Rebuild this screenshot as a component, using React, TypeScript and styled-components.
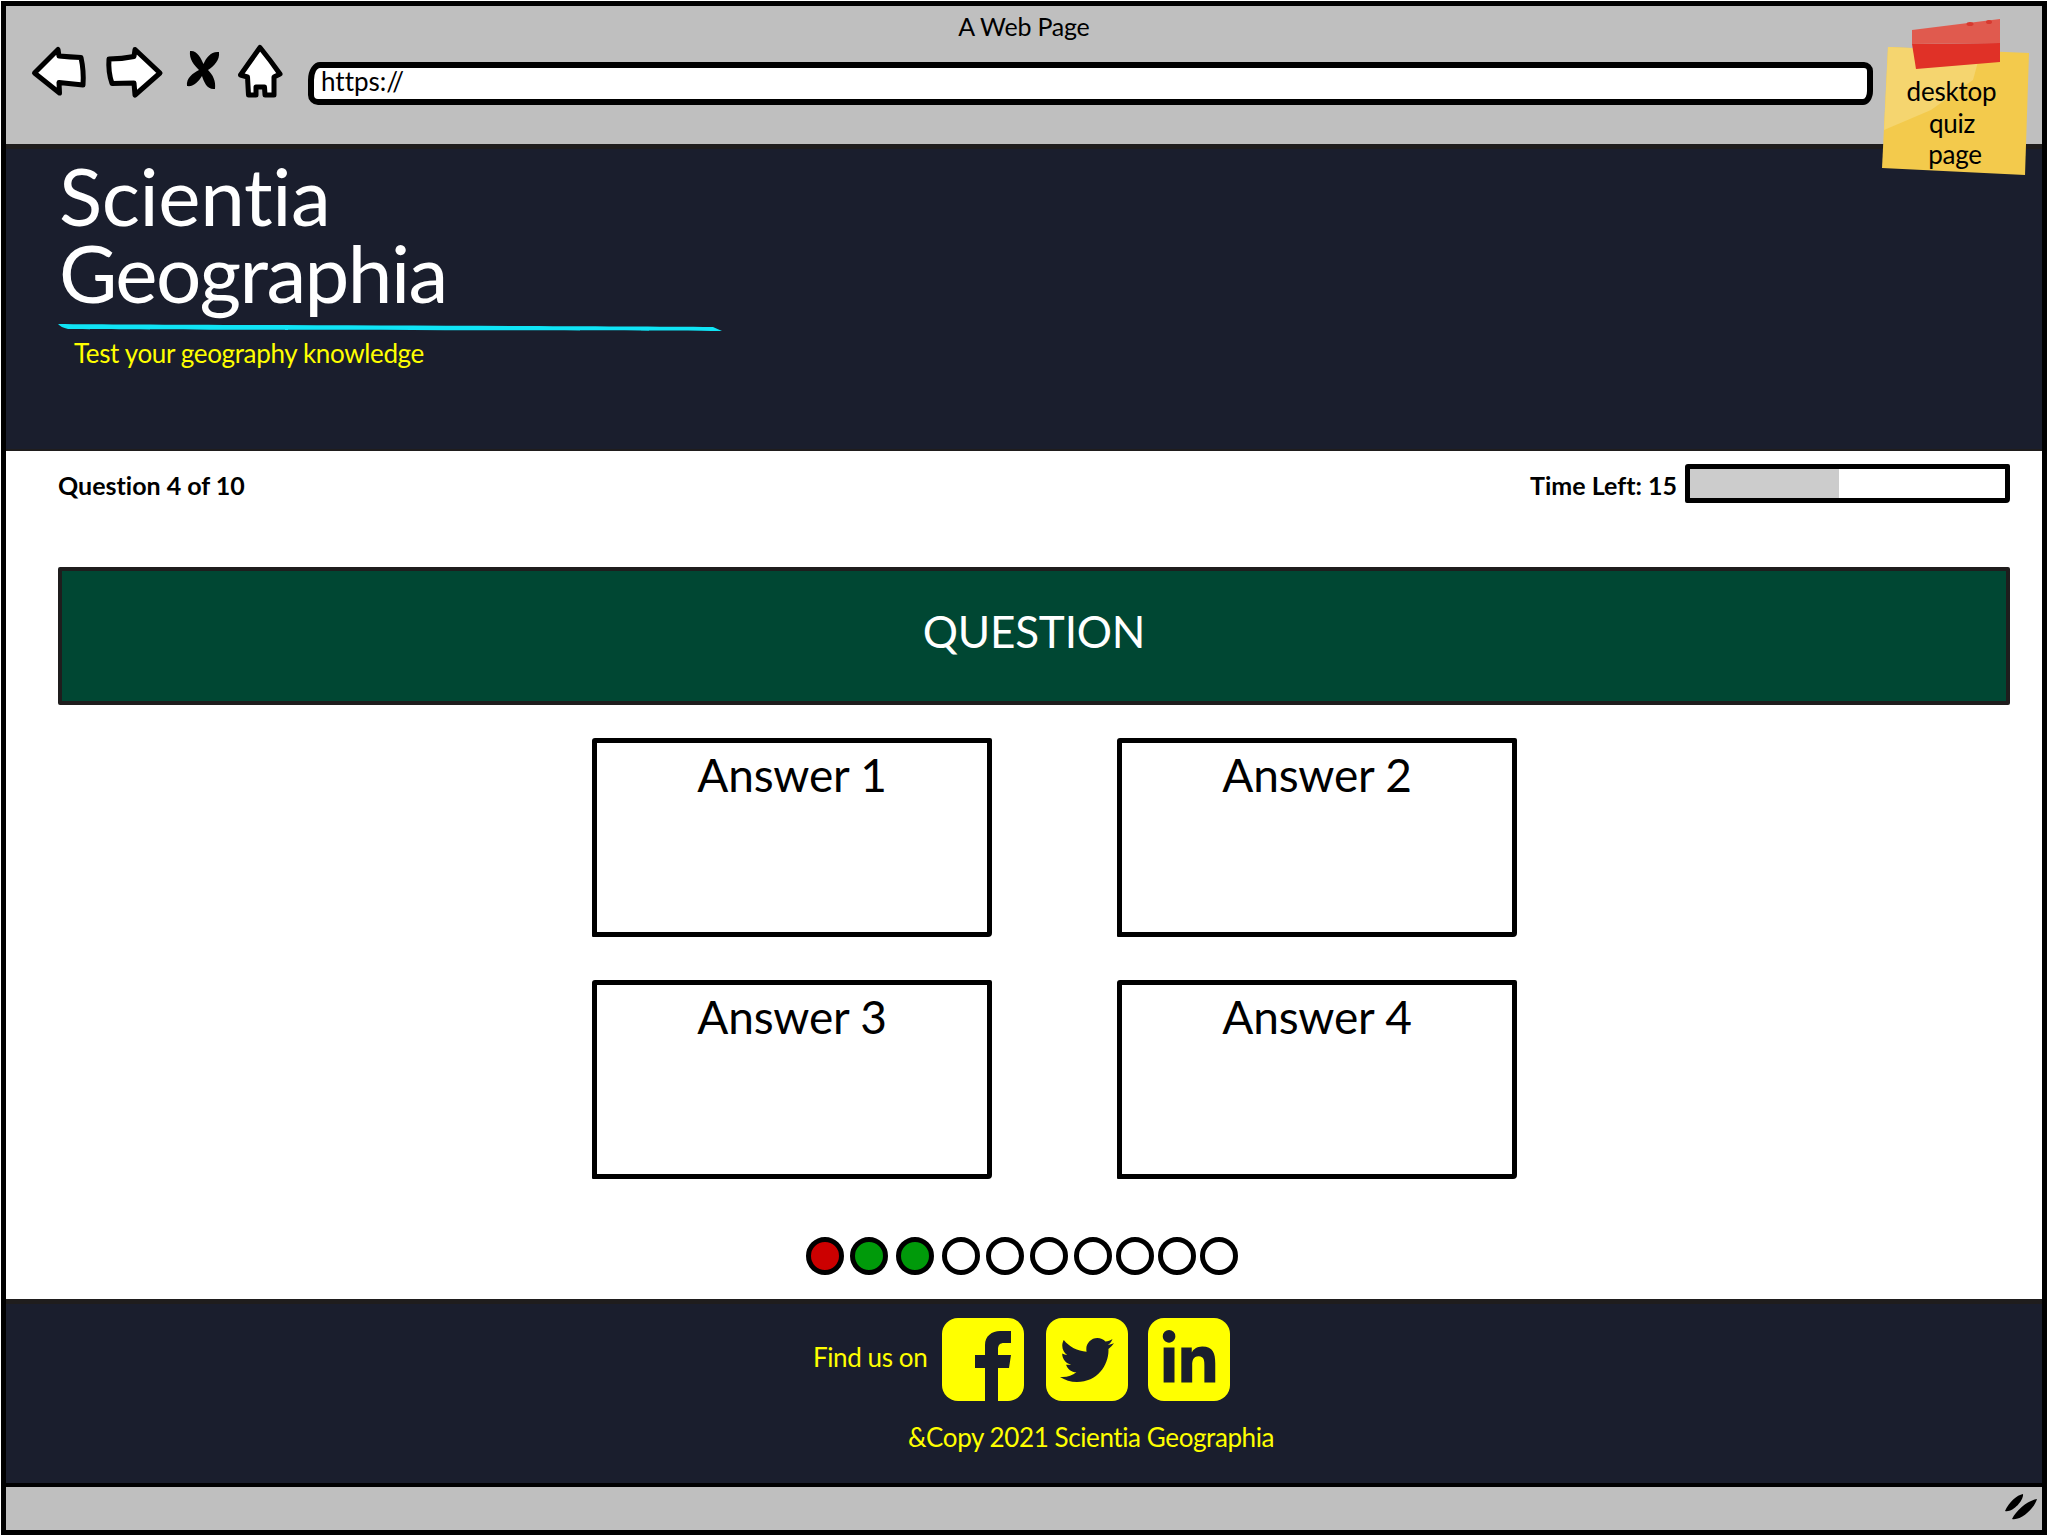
import React from "react";
import styled, { createGlobalStyle } from "styled-components";
import { FaTwitter, FaLinkedinIn } from "react-icons/fa";

const GlobalStyle = createGlobalStyle`
  html, body {
    margin: 0;
    padding: 0;
    background: #fff;
  }
  body {
    font-family: "Lato", "Noto Sans", "Liberation Sans", sans-serif;
    font-variant-ligatures: none;
  }
`;

const Frame = styled.div`
  position: relative;
  box-sizing: border-box;
  width: 2046px;
  height: 1534px;
  margin: 1px;
  border: 5px solid #000;
  display: flex;
  flex-direction: column;
  overflow: hidden;
`;

const Toolbar = styled.div`
  box-sizing: border-box;
  height: 138px;
  background: #bfbfbf;
  padding-top: 5px;
`;

const PageTitle = styled.div`
  height: 30px;
  line-height: 30px;
  font-size: 25px;
  letter-spacing: -0.2px;
  text-align: center;
  color: #000;
`;

const NavRow = styled.div`
  display: flex;
  align-items: flex-start;
  margin-top: 5px;
  padding: 0 169px 0 26px;
`;

const NavIcon = styled.svg<{ $gap?: number; $top?: number }>`
  flex: none;
  overflow: visible;
  margin-left: ${(p) => p.$gap || 0}px;
  margin-top: ${(p) => p.$top || 0}px;
`;

const AddressBar = styled.div`
  flex: 1;
  box-sizing: border-box;
  height: 43px;
  margin: 16px 0 0 25px;
  padding-left: 7px;
  border: 6px solid #000;
  border-radius: 12px 9px 10px 10px / 18px 9px 14px 10px;
  background: #fff;
  font-size: 26px;
  line-height: 26px;
  color: #000;
`;

const Note = styled.div`
  position: absolute;
  left: 1875px;
  top: 12px;
  width: 155px;
  height: 170px;
  z-index: 2;
`;

const NoteArt = styled.svg`
  position: absolute;
  inset: 0;
`;

const NoteText = styled.div`
  position: absolute;
  left: -3px;
  top: 58px;
  width: 146px;
  text-align: center;
  font-size: 26px;
  line-height: 31.5px;
  letter-spacing: -0.2px;
  color: #000;
`;

const NoteLine = styled.div<{ $shift?: number }>`
  padding-left: ${(p) => p.$shift || 0}px;
`;

const Header = styled.header`
  box-sizing: border-box;
  height: 307px;
  background: #1a1e2d;
  border-top: 5px solid #1f1d1d;
  border-bottom: 2px solid #1f1d1d;
  padding: 8px 0 0 53px;
`;

const SiteTitle = styled.h1`
  margin: 0;
  font-size: 80px;
  line-height: 77px;
  font-weight: 400;
  color: #fff;
`;

const TitleLine = styled.div<{ $spacing: number }>`
  letter-spacing: ${(p) => p.$spacing}px;
`;

const Underline = styled.svg`
  display: block;
  margin: 13px 0 0 -1px;
`;

const Tagline = styled.div`
  margin: 4px 0 0 15px;
  font-size: 26px;
  line-height: 32px;
  letter-spacing: -0.35px;
  color: #ffff00;
`;

const Main = styled.main`
  flex: 1;
  background: #fff;
  padding: 13px 32px 0 52px;
`;

const StatusRow = styled.div`
  display: flex;
  align-items: center;
  justify-content: space-between;
  height: 39px;
`;

const StatusText = styled.div`
  font-size: 25px;
  font-weight: 700;
  padding-top: 3px;
  color: #000;
`;

const Timer = styled.div`
  display: flex;
  align-items: center;
  gap: 8px;
`;

const TimerBar = styled.div`
  box-sizing: border-box;
  width: 325px;
  height: 39px;
  border: 5px solid #000;
  border-radius: 3px 2px 4px 2px;
  background: #fff;
`;

const TimerFill = styled.div`
  height: 100%;
  background: #cccccc;
`;

const QuestionBanner = styled.div`
  box-sizing: border-box;
  height: 138px;
  margin-top: 64px;
  border: 4px solid #1f1d1d;
  border-radius: 2px;
  background: #004733;
  display: flex;
  align-items: center;
  justify-content: center;
  font-size: 44px;
  letter-spacing: -0.2px;
  color: #fff;
  padding-bottom: 11px;
`;

const AnswerGrid = styled.div`
  display: grid;
  grid-template-columns: 400px 400px;
  grid-auto-rows: 199px;
  column-gap: 125px;
  row-gap: 43px;
  margin: 33px 0 0 534px;
`;

const AnswerCard = styled.div`
  box-sizing: border-box;
  border: 5px solid #000;
  border-radius: 3px 2px 4px 1px;
  background: #fff;
  text-align: center;
  font-size: 46px;
  line-height: 60px;
  letter-spacing: -0.2px;
  padding-top: 2px;
  color: #000;
`;

const ProgressRow = styled.div`
  display: flex;
  margin: 58px 0 0 748px;
`;

const Dot = styled.div<{ $color: string; $gap: number }>`
  box-sizing: border-box;
  width: 38px;
  height: 38px;
  margin-left: ${(p) => p.$gap}px;
  border: 5px solid #000;
  border-radius: 50%;
  background: ${(p) => p.$color};
`;

const Footer = styled.footer`
  box-sizing: border-box;
  height: 184px;
  background: #1a1e2d;
  border-top: 5px solid #1f1d1d;
  padding: 14px 0 0 807px;
`;

const SocialRow = styled.div`
  display: flex;
  align-items: center;
`;

const FooterText = styled.div`
  font-size: 26px;
  line-height: 30px;
  letter-spacing: -0.4px;
  color: #ffff00;
`;

const FindUs = styled(FooterText)`
  width: 121px;
  padding-bottom: 5px;
  white-space: nowrap;
`;

const SocialBox = styled.div<{ $gap: number }>`
  width: 82px;
  height: 83px;
  margin-left: ${(p) => p.$gap}px;
  border-radius: 16px;
  background: #ffff00;
  color: #1a1e2d;
  display: flex;
  align-items: center;
  justify-content: center;
  overflow: hidden;
`;

const Copyright = styled(FooterText)`
  margin: 21px 0 0 95px;
`;

const StatusBar = styled.div`
  box-sizing: border-box;
  height: 47px;
  background: #bfbfbf;
  border-top: 4px solid #000;
  display: flex;
  justify-content: flex-end;
  padding: 7px 4px 0 0;
`;

const BackIcon = () => (
  <NavIcon width={56} height={52} viewBox="0 0 56 52">
    <path d="M2.5 27 L26 3.5 L27 10 Q38 11 49 11.5 Q52 25 51 39 L27 36.5 L27.5 47 Z" fill="#fff" stroke="#000" strokeWidth={5} strokeLinejoin="round" />
  </NavIcon>
);

const ForwardIcon = () => (
  <NavIcon width={57} height={52} viewBox="0 0 57 52" $gap={18}>
    <path d="M3 13 Q16 13 28 10.5 L29 3.5 L54 27 L29 49 L28 37 Q16 37 6 37.5 Q2 26 3 13 Z" fill="#fff" stroke="#000" strokeWidth={5} strokeLinejoin="round" />
  </NavIcon>
);

const CloseIcon = () => (
  <NavIcon width={33} height={40} viewBox="0 0 33 40" $gap={24} $top={4}>
    <path d="M3 1 C10 0 14 8 16.5 14 C19 8 24 1 32 2 C33 10 27 16 21 20 C26 25 29 31 28 39 C20 40 17 32 15 26 C11 32 7 37 0 36 C-1 28 6 23 12 20 C7 15 2 9 3 1 Z" fill="#000" />
  </NavIcon>
);

const HomeIcon = () => (
  <NavIcon width={45} height={54} viewBox="0 0 45 54" $gap={18} $top={-2}>
    <path d="M22 3.5 Q33 17 42 30 L36 33 L36 51 L27 51 L26.5 43 L18 43 L18 51 L10.5 51 L9.5 33 L2.5 31 Q13 16 22 3.5 Z" fill="#fff" stroke="#000" strokeWidth={5} strokeLinejoin="round" />
  </NavIcon>
);

const FacebookGlyph = () => (
  <svg width={82} height={83} viewBox="0 0 82 83">
    <path d="M43 83 V50 H33 V37 H43 V27 C43 18 50 13 58 13 H69 V25 H62 C58 25 56 27 56 31 V37 H69 L67 50 H56 V83 Z" fill="currentColor" />
  </svg>
);

const ResizeGrip = () => (
  <svg width={33} height={26} viewBox="0 0 33 26">
    <path d="M0 17 C4 8 12 1 18 0 C19 6 8 19 0 17 Z M7 25 C12 15 24 6 32 5 C30 13 17 27 7 25 Z" fill="#000" />
  </svg>
);

const NoteDrawing = () => (
  <NoteArt width={155} height={170} viewBox="0 0 155 170">
    <path d="M7 29 L148 35 L144 157 L1 150 Z" fill="#f3ca4c" />
    <path d="M7 29 L100 33 L92 62 L50 92 L3 112 Z" fill="#f5d56f" />
    <path d="M31 26 L119 25 L119 44 L35 51 Z" fill="#e03127" />
    <path d="M31 12 L119 1 L119 25 L31 26 Z" fill="#e05a4e" />
    <ellipse cx="89" cy="6" rx="3.5" ry="2" fill="#d8392f" />
    <ellipse cx="108" cy="4" rx="3" ry="2" fill="#d8392f" />
  </NoteArt>
);

const results = [
  { color: "#cc0000", gap: 0 },
  { color: "#009a0a", gap: 6 },
  { color: "#009a0a", gap: 8 },
  { color: "#fff", gap: 8 },
  { color: "#fff", gap: 6 },
  { color: "#fff", gap: 6 },
  { color: "#fff", gap: 6 },
  { color: "#fff", gap: 4 },
  { color: "#fff", gap: 4 },
  { color: "#fff", gap: 4 },
];

const answers = ["Answer 1", "Answer 2", "Answer 3", "Answer 4"];

const timeFraction = 149 / 315;

export default function App() {
  return (
    <>
      <GlobalStyle />
      <Frame>
        <Toolbar>
          <PageTitle>A Web Page</PageTitle>
          <NavRow>
            <BackIcon />
            <ForwardIcon />
            <CloseIcon />
            <HomeIcon />
            <AddressBar>https://</AddressBar>
          </NavRow>
        </Toolbar>
        <Note>
          <NoteDrawing />
          <NoteText>
            <NoteLine $shift={1}>desktop</NoteLine>
            <NoteLine $shift={2}>quiz</NoteLine>
            <NoteLine $shift={8}>page</NoteLine>
          </NoteText>
        </Note>
        <Header>
          <SiteTitle>
            <TitleLine $spacing={-0.4}>Scientia</TitleLine>
            <TitleLine $spacing={-1.6}>Geographia</TitleLine>
          </SiteTitle>
          <Underline width={664} height={9} viewBox="0 0 664 9">
            <path d="M0 0 C100 1 500 2 655 3 L664 7 C500 6 100 6 10 5 C5 4 2 2 0 0 Z" fill="#10e4f5" />
          </Underline>
          <Tagline>Test your geography knowledge</Tagline>
        </Header>
        <Main>
          <StatusRow>
            <StatusText>Question 4 of 10</StatusText>
            <Timer>
              <StatusText>Time Left: 15</StatusText>
              <TimerBar>
                <TimerFill style={{ width: `${timeFraction * 100}%` }} />
              </TimerBar>
            </Timer>
          </StatusRow>
          <QuestionBanner>QUESTION</QuestionBanner>
          <AnswerGrid>
            {answers.map((a) => (
              <AnswerCard key={a}>{a}</AnswerCard>
            ))}
          </AnswerGrid>
          <ProgressRow>
            {results.map((r, i) => (
              <Dot key={i} $color={r.color} $gap={r.gap} />
            ))}
          </ProgressRow>
        </Main>
        <Footer>
          <SocialRow>
            <FindUs>Find us on</FindUs>
            <SocialBox $gap={8}>
              <FacebookGlyph />
            </SocialBox>
            <SocialBox $gap={22}>
              <FaTwitter size={54} />
            </SocialBox>
            <SocialBox $gap={20}>
              <FaLinkedinIn size={60} />
            </SocialBox>
          </SocialRow>
          <Copyright>&amp;Copy 2021 Scientia Geographia</Copyright>
        </Footer>
        <StatusBar>
          <ResizeGrip />
        </StatusBar>
      </Frame>
    </>
  );
}
